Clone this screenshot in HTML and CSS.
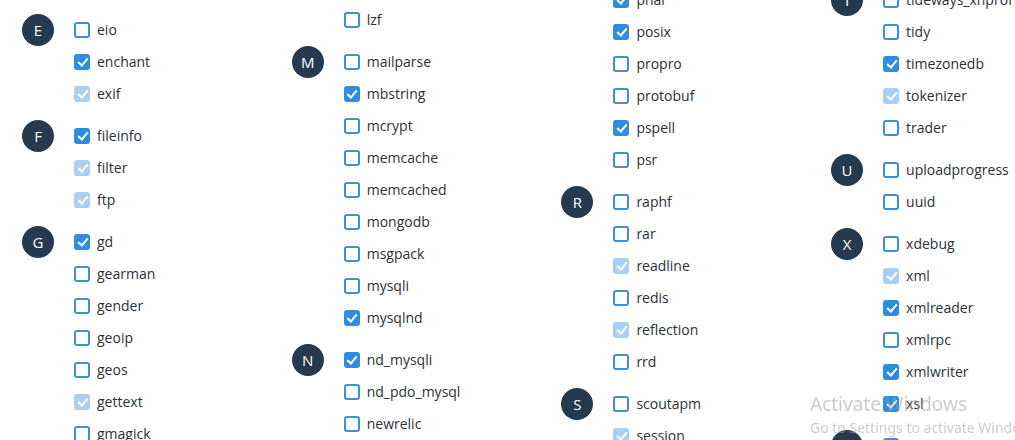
FILE: index.html
```html
<!DOCTYPE html>
<html lang="en">
<head>
<meta charset="utf-8">
<title>PHP extensions</title>
<link rel="stylesheet" href="styles.css">
</head>
<body>
<div class="board">
  <div class="col col-1">
    <div class="group">
      <div class="letter">E</div>
      <ul class="items">
        <li class="item"><span class="box"></span><span class="name">eio</span></li>
        <li class="item"><span class="box on"></span><span class="name">enchant</span></li>
        <li class="item"><span class="box fixed"></span><span class="name">exif</span></li>
      </ul>
    </div>
    <div class="group">
      <div class="letter">F</div>
      <ul class="items">
        <li class="item"><span class="box on"></span><span class="name">fileinfo</span></li>
        <li class="item"><span class="box fixed"></span><span class="name">filter</span></li>
        <li class="item"><span class="box fixed"></span><span class="name">ftp</span></li>
      </ul>
    </div>
    <div class="group">
      <div class="letter">G</div>
      <ul class="items">
        <li class="item"><span class="box on"></span><span class="name">gd</span></li>
        <li class="item"><span class="box"></span><span class="name">gearman</span></li>
        <li class="item"><span class="box"></span><span class="name">gender</span></li>
        <li class="item"><span class="box"></span><span class="name">geoip</span></li>
        <li class="item"><span class="box"></span><span class="name">geos</span></li>
        <li class="item"><span class="box fixed"></span><span class="name">gettext</span></li>
        <li class="item"><span class="box"></span><span class="name">gmagick</span></li>
        <li class="item"><span class="box"></span><span class="name">gmp</span></li>
      </ul>
    </div>
  </div>

  <div class="col col-2">
    <div class="group">
      <div class="letter">L</div>
      <ul class="items">
        <li class="item"><span class="box"></span><span class="name">ldap</span></li>
        <li class="item"><span class="box"></span><span class="name">leveldb</span></li>
        <li class="item"><span class="box"></span><span class="name">lzf</span></li>
      </ul>
    </div>
    <div class="group">
      <div class="letter">M</div>
      <ul class="items">
        <li class="item"><span class="box"></span><span class="name">mailparse</span></li>
        <li class="item"><span class="box on"></span><span class="name">mbstring</span></li>
        <li class="item"><span class="box"></span><span class="name">mcrypt</span></li>
        <li class="item"><span class="box"></span><span class="name">memcache</span></li>
        <li class="item"><span class="box"></span><span class="name">memcached</span></li>
        <li class="item"><span class="box"></span><span class="name">mongodb</span></li>
        <li class="item"><span class="box"></span><span class="name">msgpack</span></li>
        <li class="item"><span class="box"></span><span class="name">mysqli</span></li>
        <li class="item"><span class="box on"></span><span class="name">mysqlnd</span></li>
      </ul>
    </div>
    <div class="group">
      <div class="letter">N</div>
      <ul class="items">
        <li class="item"><span class="box on"></span><span class="name">nd_mysqli</span></li>
        <li class="item"><span class="box"></span><span class="name">nd_pdo_mysql</span></li>
        <li class="item"><span class="box"></span><span class="name">newrelic</span></li>
      </ul>
    </div>
  </div>

  <div class="col col-3">
    <div class="group">
      <div class="letter">P</div>
      <ul class="items">
        <li class="item"><span class="box"></span><span class="name">pgsql</span></li>
        <li class="item"><span class="box on"></span><span class="name">phar</span></li>
        <li class="item"><span class="box on"></span><span class="name">posix</span></li>
        <li class="item"><span class="box"></span><span class="name">propro</span></li>
        <li class="item"><span class="box"></span><span class="name">protobuf</span></li>
        <li class="item"><span class="box on"></span><span class="name">pspell</span></li>
        <li class="item"><span class="box"></span><span class="name">psr</span></li>
      </ul>
    </div>
    <div class="group">
      <div class="letter">R</div>
      <ul class="items">
        <li class="item"><span class="box"></span><span class="name">raphf</span></li>
        <li class="item"><span class="box"></span><span class="name">rar</span></li>
        <li class="item"><span class="box fixed"></span><span class="name">readline</span></li>
        <li class="item"><span class="box"></span><span class="name">redis</span></li>
        <li class="item"><span class="box fixed"></span><span class="name">reflection</span></li>
        <li class="item"><span class="box"></span><span class="name">rrd</span></li>
      </ul>
    </div>
    <div class="group">
      <div class="letter">S</div>
      <ul class="items">
        <li class="item"><span class="box"></span><span class="name">scoutapm</span></li>
        <li class="item"><span class="box fixed"></span><span class="name">session</span></li>
      </ul>
    </div>
  </div>

  <div class="col col-4">
    <div class="group">
      <div class="letter">T</div>
      <ul class="items">
        <li class="item"><span class="box"></span><span class="name">tideways_xhprof</span></li>
        <li class="item"><span class="box"></span><span class="name">tidy</span></li>
        <li class="item"><span class="box on"></span><span class="name">timezonedb</span></li>
        <li class="item"><span class="box fixed"></span><span class="name">tokenizer</span></li>
        <li class="item"><span class="box"></span><span class="name">trader</span></li>
      </ul>
    </div>
    <div class="group">
      <div class="letter">U</div>
      <ul class="items">
        <li class="item"><span class="box"></span><span class="name">uploadprogress</span></li>
        <li class="item"><span class="box"></span><span class="name">uuid</span></li>
      </ul>
    </div>
    <div class="group">
      <div class="letter">X</div>
      <ul class="items">
        <li class="item"><span class="box"></span><span class="name">xdebug</span></li>
        <li class="item"><span class="box fixed"></span><span class="name">xml</span></li>
        <li class="item"><span class="box on"></span><span class="name">xmlreader</span></li>
        <li class="item"><span class="box"></span><span class="name">xmlrpc</span></li>
        <li class="item"><span class="box on"></span><span class="name">xmlwriter</span></li>
        <li class="item"><span class="box on"></span><span class="name">xsl</span></li>
      </ul>
    </div>
    <div class="group">
      <div class="letter">Y</div>
      <ul class="items">
        <li class="item"><span class="box"></span><span class="name">yaml</span></li>
      </ul>
    </div>
  </div>
</div>

<div class="watermark">
  <div class="wm-title">Activate Windows</div>
  <div class="wm-sub">Go to Settings to activate Windows.</div>
</div>
</body>
</html>
```

FILE: styles.css
```css
html, body {
  margin: 0;
  padding: 0;
  background: #ffffff;
  overflow: hidden;
  height: 440px;
}

body {
  font-family: "Open Sans", "Noto Sans", Arial, sans-serif;
  color: #2c3136;
}

.board {
  display: grid;
  grid-template-columns: repeat(4, 269.7px);
  padding-left: 22px;
  width: 1100px;
  align-items: start;
}

.col {
  display: flex;
  flex-direction: column;
  gap: 10px;
}

.col-1 { margin-top: 14px; }
.col-2 { margin-top: -60px; }
.col-3 { margin-top: -48px; }
.col-4 { margin-top: -16px; }

.group {
  display: flex;
  align-items: flex-start;
  gap: 20px;
}

.letter {
  flex: none;
  width: 32px;
  height: 32px;
  border-radius: 50%;
  background: #263a4f;
  color: #ffffff;
  font-size: 15px;
  line-height: 32px;
  text-align: center;
}

.items {
  list-style: none;
  margin: 0;
  padding: 0;
  display: flex;
  flex-direction: column;
}

.item {
  height: 32px;
  display: flex;
  align-items: center;
  gap: 7px;
  font-size: 14px;
}

.name {
  line-height: 20px;
}

.box {
  position: relative;
  flex: none;
  box-sizing: border-box;
  width: 16px;
  height: 16px;
  border: 2px solid #3c8fda;
  border-radius: 3px;
  background: #ffffff;
}

.box.on {
  background: #2e8de0;
  border-color: #2e8de0;
}

.box.fixed {
  background: #a9d0f3;
  border-color: #a9d0f3;
}

.box.on::after,
.box.fixed::after {
  content: "";
  position: absolute;
  left: 3.5px;
  top: 0px;
  width: 4px;
  height: 8px;
  border-right: 2px solid #ffffff;
  border-bottom: 2px solid #ffffff;
  transform: rotate(40deg);
}

.watermark {
  position: fixed;
  left: 810px;
  top: 392px;
  color: rgba(160, 160, 160, 0.55);
  white-space: nowrap;
  pointer-events: none;
}

.wm-title {
  font-family: "Noto Sans", "Open Sans", sans-serif;
  font-size: 19px;
  line-height: 25px;
}

.wm-sub {
  font-family: "Noto Sans", "Open Sans", sans-serif;
  font-size: 14px;
  line-height: 20px;
  margin-top: 1px;
}
```
